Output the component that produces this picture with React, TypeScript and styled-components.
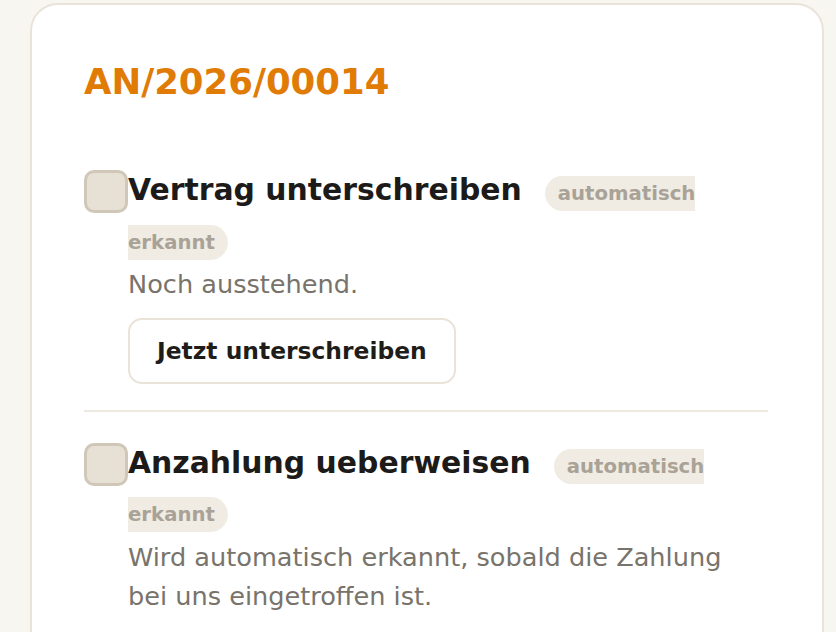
import styled, { createGlobalStyle } from 'styled-components'

const GlobalStyle = createGlobalStyle`
  html, body {
    margin: 0;
    background: #f8f6f1;
    font-family: "DejaVu Sans", "Liberation Sans", sans-serif;
  }
`

const Page = styled.div`
  padding: 3px 12px 0 30px;
`

const Card = styled.section`
  background: #ffffff;
  border: 2px solid #e9e3d9;
  border-radius: 28px;
  padding: 54px 54px 51px 52px;
`

const Reference = styled.h2`
  margin: 0 0 34px;
  font-size: 35.5px;
  line-height: 1.3;
  font-weight: 700;
  color: #e07b06;
`

const Steps = styled.ul`
  list-style: none;
  margin: 0;
  padding: 0;
`

const Step = styled.li<{ $last?: boolean }>`
  display: flex;
  align-items: flex-start;
  padding: 27px 0 26px;
  border-bottom: ${(p) => (p.$last ? 'none' : '2px solid #efeae1')};
`

const Checkbox = styled.span<{ $checked?: boolean }>`
  flex-shrink: 0;
  box-sizing: border-box;
  width: 44px;
  height: 43px;
  margin-top: 4px;
  border: 3px solid #d0c7b8;
  border-radius: 10px;
  background: ${(p) => (p.$checked ? '#e07b06' : '#e6e0d5')};
`

const Body = styled.div`
  flex: 1;
  min-width: 0;
  padding-right: 16px;
`

const Title = styled.h3`
  margin: 0;
  font-size: 29.85px;
  line-height: 1.625;
  font-weight: 700;
  color: #1c1b19;
`

const Badge = styled.span`
  margin-left: 23px;
  padding: 6px 13px;
  border-radius: 999px;
  background: #f1ece3;
  color: #a9a297;
  font-size: 19.7px;
  font-weight: 700;
`

const Note = styled.p`
  margin: 2px 0 0;
  font-size: 25.6px;
  line-height: 1.55;
  color: #78736b;
`

const Action = styled.button`
  margin-top: 13px;
  padding: 17px 27px;
  background: #ffffff;
  border: 2px solid #e9e3d8;
  border-radius: 14px;
  font-family: inherit;
  font-size: 23.4px;
  line-height: normal;
  font-weight: 700;
  color: #1f1d1a;
  cursor: pointer;
`

type Item = {
  title: string
  note: string
  action?: string
  auto?: boolean
}

const items: Item[] = [
  {
    title: 'Vertrag unterschreiben',
    note: 'Noch ausstehend.',
    action: 'Jetzt unterschreiben',
    auto: true,
  },
  {
    title: 'Anzahlung ueberweisen',
    note: 'Wird automatisch erkannt, sobald die Zahlung bei uns eingetroffen ist.',
    auto: true,
  },
]

export default function App() {
  return (
    <Page>
      <GlobalStyle />
      <Card>
        <Reference>AN/2026/00014</Reference>
        <Steps>
          {items.map((item, i) => (
            <Step key={item.title} $last={i === items.length - 1}>
              <Checkbox />
              <Body>
                <Title>
                  {item.title}
                  {item.auto && <Badge>automatisch erkannt</Badge>}
                </Title>
                <Note>{item.note}</Note>
                {item.action && <Action>{item.action}</Action>}
              </Body>
            </Step>
          ))}
        </Steps>
      </Card>
    </Page>
  )
}
